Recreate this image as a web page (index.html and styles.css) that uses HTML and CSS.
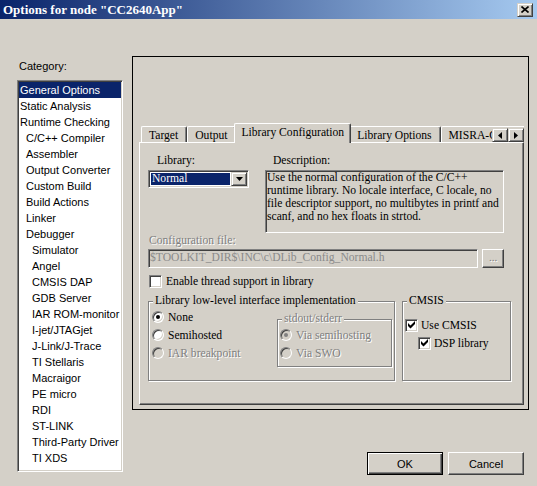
FILE: index.html
```html
<!DOCTYPE html>
<html>
<head>
<meta charset="utf-8">
<title>Options for node "CC2640App"</title>
<link rel="stylesheet" href="styles.css">
</head>
<body>
<div class="titlebar">
  <span class="title">Options for node "CC2640App"</span>
  <span class="close"><svg width="8" height="7" viewBox="0 0 8 7"><path d="M0.5 0.5 L7.5 6.5 M7.5 0.5 L0.5 6.5" stroke="#000" stroke-width="1.6" fill="none"/></svg></span>
</div>
<div class="main">
  <div class="cat">
    <div class="cat-label">Category:</div>
    <ul class="list">
      <li class="sel">General Options</li>
      <li>Static Analysis</li>
      <li>Runtime Checking</li>
      <li class="l1">C/C++ Compiler</li>
      <li class="l1">Assembler</li>
      <li class="l1">Output Converter</li>
      <li class="l1">Custom Build</li>
      <li class="l1">Build Actions</li>
      <li class="l1">Linker</li>
      <li class="l1">Debugger</li>
      <li class="l2">Simulator</li>
      <li class="l2">Angel</li>
      <li class="l2">CMSIS DAP</li>
      <li class="l2">GDB Server</li>
      <li class="l2">IAR ROM-monitor</li>
      <li class="l2">I-jet/JTAGjet</li>
      <li class="l2">J-Link/J-Trace</li>
      <li class="l2">TI Stellaris</li>
      <li class="l2">Macraigor</li>
      <li class="l2">PE micro</li>
      <li class="l2">RDI</li>
      <li class="l2">ST-LINK</li>
      <li class="l2">Third-Party Driver</li>
      <li class="l2">TI XDS</li>
    </ul>
  </div>
  <div class="right">
    <div class="frame">
      <div class="tabctl">
        <div class="tabs">
          <div class="tab">Target</div>
          <div class="tab">Output</div>
          <div class="tab active">Library Configuration</div>
          <div class="tab">Library Options</div>
          <div class="tab">MISRA-C:2004</div>
          <div class="tabscroll">
            <span class="sbtn"><svg width="4" height="7" viewBox="0 0 4 7"><path d="M4 0 L0 3.5 L4 7 Z" fill="#000"/></svg></span>
            <span class="sbtn"><svg width="4" height="7" viewBox="0 0 4 7"><path d="M0 0 L4 3.5 L0 7 Z" fill="#000"/></svg></span>
          </div>
        </div>
        <div class="page">
          <div class="row1">
            <div class="lib-col">
              <div class="lbl lib-lbl">Library:</div>
              <div class="combo">
                <span class="combo-val">Normal</span>
                <span class="combo-btn"><svg width="7" height="4" viewBox="0 0 7 4"><path d="M0 0 L7 0 L3.5 4 Z" fill="#000"/></svg></span>
              </div>
            </div>
            <div class="desc-col">
              <div class="lbl desc-lbl">Description:</div>
              <div class="desc">Use the normal configuration of the C/C++<br>runtime library. No locale interface, C locale, no<br>file descriptor support, no multibytes in printf and<br>scanf, and no hex floats in strtod.</div>
            </div>
          </div>
          <div class="lbl cfg-lbl disabled">Configuration file:</div>
          <div class="cfg-row">
            <div class="cfg-field">$TOOLKIT_DIR$\INC\c\DLib_Config_Normal.h</div>
            <div class="cfg-btn disabled">...</div>
          </div>
          <div class="opt thread">
            <span class="chk"></span>
            <span>Enable thread support in library</span>
          </div>
          <div class="groups">
            <fieldset class="grp grp-lib">
              <legend>Library low-level interface implementation</legend>
              <div class="grp-body">
                <div class="radios">
                  <div class="opt"><span class="rad on"></span><span>None</span></div>
                  <div class="opt"><span class="rad"></span><span>Semihosted</span></div>
                  <div class="opt"><span class="rad off"></span><span class="disabled">IAR breakpoint</span></div>
                </div>
                <fieldset class="grp grp-std">
                  <legend class="disabled">stdout/stderr</legend>
                  <div class="std-body">
                    <div class="opt"><span class="rad off on"></span><span class="disabled">Via semihosting</span></div>
                    <div class="opt"><span class="rad off"></span><span class="disabled">Via SWO</span></div>
                  </div>
                </fieldset>
              </div>
            </fieldset>
            <fieldset class="grp grp-cmsis">
              <legend>CMSIS</legend>
              <div class="cmsis-body">
                <div class="opt"><span class="chk on"><svg width="7" height="8" viewBox="0 0 7 8"><path d="M0 2 L2.5 4.5 L7 0 L7 3 L2.5 7.5 L0 5 Z" fill="#000"/></svg></span><span>Use CMSIS</span></div>
                <div class="opt dsp"><span class="chk on"><svg width="7" height="8" viewBox="0 0 7 8"><path d="M0 2 L2.5 4.5 L7 0 L7 3 L2.5 7.5 L0 5 Z" fill="#000"/></svg></span><span>DSP library</span></div>
              </div>
            </fieldset>
          </div>
        </div>
      </div>
    </div>
    <div class="btns">
      <button class="btn default">OK</button>
      <button class="btn">Cancel</button>
    </div>
  </div>
</div>
</body>
</html>
```
FILE: styles.css
```css
* { box-sizing: border-box; }

body {
  margin: 0;
  width: 537px;
  height: 486px;
  overflow: hidden;
  background: #d4d0c8;
  font-family: "Liberation Serif", serif;
  font-size: 11.6px;
  color: #000;
}

/* title bar */
.titlebar {
  height: 19px;
  background: linear-gradient(to right, #0a246a, #a6caf0);
  display: flex;
  align-items: center;
  justify-content: space-between;
  padding: 0 4px 0 3px;
}
.title {
  color: #fff;
  font-weight: bold;
  font-size: 13px;
  line-height: 19px;
  white-space: nowrap;
}
.close {
  width: 16px;
  height: 14px;
  background: #d4d0c8;
  border: 1px solid;
  border-color: #d4d0c8 #404040 #404040 #d4d0c8;
  box-shadow: inset 1px 1px 0 #fff, inset -1px -1px 0 #808080;
  display: flex;
  align-items: center;
  justify-content: center;
}
.close svg { display: block; }

.main { display: flex; }

/* category list */
.cat {
  padding: 41px 0 0 17px;
  width: 123px;
}
.cat-label {
  font-family: "Liberation Sans", sans-serif;
  font-size: 11px;
  line-height: 13px;
  margin-bottom: 7px;
  padding-left: 2px;
}
.list {
  list-style: none;
  margin: 0;
  padding: 1px;
  width: 106px;
  height: 392px;
  background: #fff;
  border: 1px solid;
  border-color: #808080 #fff #fff #808080;
  box-shadow: inset 1px 1px 0 #404040, inset -1px -1px 0 #d4d0c8;
}
.list li {
  height: 16px;
  line-height: 16px;
  padding-left: 1px;
  font-family: "Liberation Sans", sans-serif;
  font-size: 11px;
  white-space: nowrap;
}
.list li.l1 { padding-left: 7px; }
.list li.l2 { padding-left: 13px; }
.list li.sel { background: #0a246a; color: #fff; }

/* right side */
.right {
  margin-left: 9px;
  padding-top: 37px;
}
.frame {
  width: 397px;
  height: 354px;
  border: 1px solid #000;
  padding: 66px 4px 4px 6px;
}
.tabctl {
  width: 385px;
  height: 282px;
  display: flex;
  flex-direction: column;
  overflow: hidden;
}
.tabs {
  height: 19px;
  flex: none;
  display: flex;
  align-items: flex-end;
  padding-left: 2px;
  position: relative;
}
.tab {
  flex: none;
  height: 16px;
  padding: 0 8px 0 7px;
  line-height: 17px;
  white-space: nowrap;
  border-top: 1px solid #fff;
  border-left: 1px solid #fff;
  border-right: 1px solid #404040;
  box-shadow: inset -1px 0 0 #808080;
  border-radius: 2px 2px 0 0;
  background: #d4d0c8;
}
.tab.active {
  height: 20px;
  line-height: 18px;
  margin: 0 -2px -1px;
  padding: 0 6px;
  position: relative;
  z-index: 1;
}
.tabscroll {
  position: absolute;
  right: 0;
  top: 5px;
  display: flex;
  z-index: 2;
  background: #d4d0c8;
}
.sbtn {
  width: 16px;
  height: 14px;
  background: #d4d0c8;
  border: 1px solid;
  border-color: #d4d0c8 #404040 #404040 #d4d0c8;
  box-shadow: inset 1px 1px 0 #fff, inset -1px -1px 0 #808080;
  display: flex;
  align-items: center;
  justify-content: center;
}
.sbtn svg { display: block; }

.page {
  flex: 1;
  border: 1px solid;
  border-color: #fff #404040 #404040 #fff;
  box-shadow: inset -1px -1px 0 #808080;
  padding: 11px 0 0 8px;
}

.disabled {
  color: #808080;
  text-shadow: 1px 1px 0 #fff;
}

.row1 { display: flex; }
.lbl {
  height: 14px;
  line-height: 14px;
  margin-bottom: 2px;
  white-space: nowrap;
}
.lib-col { width: 101px; }
.lib-lbl { padding-left: 9px; }
.desc-col { margin-left: 16px; }
.desc-lbl { padding-left: 8px; }

.combo, .desc, .cfg-field {
  border: 1px solid;
  border-color: #808080 #fff #fff #808080;
  box-shadow: inset 1px 1px 0 #404040, inset -1px -1px 0 #d4d0c8;
}
.combo {
  width: 101px;
  height: 18px;
  background: #fff;
  padding: 1px;
  display: flex;
}
.combo-val {
  flex: 1;
  margin: 1px;
  background: #0a246a;
  color: #fff;
  line-height: 12px;
  padding-left: 1px;
}
.combo-btn {
  width: 16px;
  height: 14px;
  background: #d4d0c8;
  border: 1px solid;
  border-color: #d4d0c8 #404040 #404040 #d4d0c8;
  box-shadow: inset 1px 1px 0 #fff, inset -1px -1px 0 #808080;
  display: flex;
  align-items: center;
  justify-content: center;
}
.combo-btn svg { display: block; }

.desc {
  width: 239px;
  height: 63px;
  background: #d4d0c8;
  padding: 0 1px;
  line-height: 13px;
  white-space: nowrap;
  overflow: hidden;
}

.cfg-lbl {
  margin-top: 1px;
  margin-bottom: 1px;
  padding-left: 1px;
}
.cfg-row {
  display: flex;
  gap: 4px;
}
.cfg-field {
  width: 330px;
  height: 19px;
  background: #d4d0c8;
  color: #8a8a8a;
  padding: 0 1px;
  line-height: 16px;
  white-space: nowrap;
  overflow: hidden;
}
.cfg-btn {
  width: 22px;
  height: 19px;
  border: 1px solid;
  border-color: #fff #404040 #404040 #fff;
  box-shadow: inset -1px -1px 0 #808080;
  text-align: center;
  line-height: 14px;
  font-size: 11px;
}

.opt {
  display: flex;
  align-items: center;
  height: 18px;
  gap: 4px;
  white-space: nowrap;
}
.thread {
  height: 14px;
  margin-top: 6px;
  padding-left: 1px;
}

.chk {
  width: 13px;
  height: 13px;
  flex: none;
  background: #fff;
  border: 1px solid;
  border-color: #808080 #fff #fff #808080;
  box-shadow: inset 1px 1px 0 #404040, inset -1px -1px 0 #d4d0c8;
  display: flex;
  align-items: center;
  justify-content: center;
}
.chk svg { display: block; }

.rad {
  width: 12px;
  height: 12px;
  flex: none;
  border-radius: 50%;
  background: #fff;
  border: 1px solid;
  border-color: #808080 #fff #fff #808080;
  box-shadow: inset 1px 1px 0 #404040, inset -1px -1px 0 #d4d0c8;
  display: flex;
  align-items: center;
  justify-content: center;
}
.rad.on::after {
  content: "";
  width: 4px;
  height: 4px;
  border-radius: 50%;
  background: #000;
}
.rad.off { background: #d4d0c8; }
.rad.off.on::after { background: #808080; }

/* group boxes */
.groups {
  display: flex;
  margin-top: 6px;
}
.grp {
  margin: 0;
  padding: 0;
  min-width: 0;
  border: 1px solid #808080;
  box-shadow: inset 1px 1px 0 #fff, 1px 1px 0 #fff;
}
.grp legend {
  padding: 0 2px;
  margin-left: 4px;
  line-height: 14px;
  background: #d4d0c8;
  white-space: nowrap;
}
.grp-lib { width: 247px; }
.grp-body {
  display: flex;
  align-items: flex-start;
  padding: 0 0 13px 3px;
}
.radios { width: 125px; }
.grp-std {
  width: 115px;
  margin-top: 4px;
}
.std-body { padding: 0 0 4px 2px; }

.grp-cmsis {
  width: 109px;
  margin-left: 7px;
}
.cmsis-body { padding: 8px 0 0 2px; }
.cmsis-body .opt { gap: 3px; }
.cmsis-body .dsp { margin-left: 13px; }

/* dialog buttons */
.btns {
  display: flex;
  justify-content: flex-end;
  gap: 5px;
  margin-top: 42px;
  padding-right: 5px;
}
.btn {
  width: 76px;
  height: 23px;
  margin: 0;
  padding: 0;
  font-family: "Liberation Sans", sans-serif;
  font-size: 11px;
  color: #000;
  background: #d4d0c8;
  border: 1px solid;
  border-color: #fff #404040 #404040 #fff;
  box-shadow: inset -1px -1px 0 #808080;
}
.btn.default {
  border: 1px solid #000;
  box-shadow: inset 1px 1px 0 #fff, inset -1px -1px 0 #404040, inset -2px -2px 0 #808080;
}
```
